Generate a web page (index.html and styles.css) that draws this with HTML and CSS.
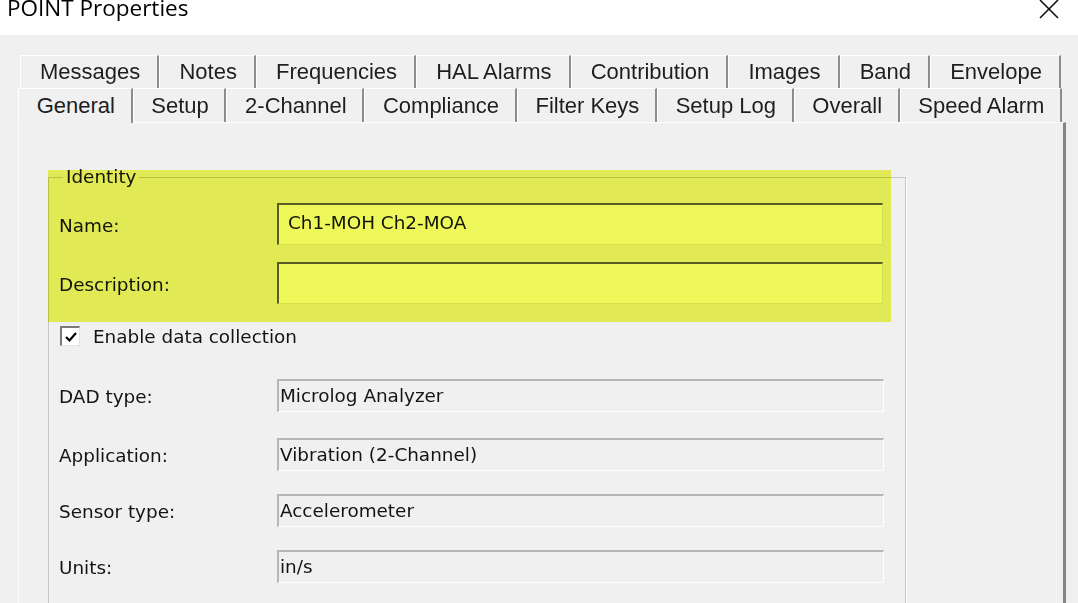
FILE: index.html
```html
<!DOCTYPE html>
<html lang="en">
<head>
    <meta charset="UTF-8">
    <meta name="viewport" content="width=device-width, initial-scale=1.0">
    <title>POINT Properties</title>
    <link rel="stylesheet" href="styles.css">
</head>
<body>
    <div class="titlebar">
        <span class="title">POINT Properties</span>
        <svg class="close" width="22" height="20" viewBox="0 0 22 20">
            <path d="M2 1 L20 19 M20 1 L2 19" stroke="#111" stroke-width="1.6" fill="none"/>
        </svg>
    </div>

    <div class="tabs">
        <div class="tab-row back">
            <div class="tab">Messages</div>
            <div class="tab">Notes</div>
            <div class="tab">Frequencies</div>
            <div class="tab">HAL Alarms</div>
            <div class="tab">Contribution</div>
            <div class="tab">Images</div>
            <div class="tab">Band</div>
            <div class="tab">Envelope</div>
        </div>
        <div class="tab-row front">
            <div class="tab active">General</div>
            <div class="tab">Setup</div>
            <div class="tab">2-Channel</div>
            <div class="tab">Compliance</div>
            <div class="tab">Filter Keys</div>
            <div class="tab">Setup Log</div>
            <div class="tab">Overall</div>
            <div class="tab">Speed Alarm</div>
        </div>
    </div>

    <div class="panel">
        <fieldset class="group">
            <legend>Identity</legend>
            <div class="row">
                <label>Name:</label>
                <div class="edit">Ch1-MOH Ch2-MOA</div>
            </div>
            <div class="row gap-desc">
                <label>Description:</label>
                <div class="edit"></div>
            </div>
            <div class="check-row">
                <span class="checkbox">
                    <svg width="14" height="12" viewBox="0 0 14 12">
                        <path d="M2 6 L5.5 9.5 L12 2" stroke="#000" stroke-width="2.2" fill="none"/>
                    </svg>
                </span>
                <span>Enable data collection</span>
            </div>
            <div class="row gap-dad">
                <label>DAD type:</label>
                <div class="field">Microlog Analyzer</div>
            </div>
            <div class="row gap-app">
                <label>Application:</label>
                <div class="field">Vibration (2-Channel)</div>
            </div>
            <div class="row gap-next">
                <label>Sensor type:</label>
                <div class="field">Accelerometer</div>
            </div>
            <div class="row gap-next">
                <label>Units:</label>
                <div class="field">in/s</div>
            </div>
        </fieldset>

        <!-- marker highlight laid over the identity fields -->
        <div class="highlight"></div>
    </div>
</body>
</html>
```

FILE: styles.css
```css
html, body {
    margin: 0;
    padding: 0;
    width: 1078px;
    height: 603px;
    overflow: hidden;
    background-color: #f0f0f0;
}

.titlebar {
    display: flex;
    justify-content: space-between;
    align-items: flex-start;
    height: 35px;
    padding: 0 18px 0 7px;
    background-color: #fff;
    box-sizing: border-box;
}

.title {
    display: block;
    margin-top: -3px;
    font-family: "Open Sans", sans-serif;
    font-size: 22.5px;
    line-height: 22px;
    color: #000;
}

.close {
    margin-top: -1px;
}

.tabs {
    padding-top: 20px;
}

.tab-row {
    display: flex;
}

.tab-row.back {
    height: 33px;
    margin: 0 17px 0 20px;
}

.tab-row.front {
    height: 34px;
    margin: 0 16px 0 18px;
}

.tab {
    flex: 1 1 auto;
    display: flex;
    align-items: center;
    justify-content: center;
    padding: 0 6px 0 8px;
    border-top: 1px solid #fff;
    border-left: 1px solid #fff;
    border-right: 2px solid #8c8c8c;
    background-color: #f0f0f0;
    font-family: "Liberation Sans", Arial, sans-serif;
    font-size: 22px;
    color: #1e1e1e;
    white-space: nowrap;
}

.tab.active {
    position: relative;
    z-index: 1;
    margin-bottom: -1px;
}

.panel {
    position: relative;
    height: 490px;
    margin: 0 12px 0 18px;
    border-top: 1px solid #fff;
    border-left: 1px solid #fcfcfc;
    border-right: 3px solid #858585;
    font-family: "DejaVu Sans", sans-serif;
    font-size: 18.4px;
    color: #141414;
}

.group {
    box-sizing: border-box;
    width: 858px;
    margin: 44px 0 0 29px;
    padding: 16px 0 60px 10px;
    border: 1px solid #c6c6c6;
    box-shadow: 1px 1px 0 #fff;
}

.group legend {
    margin-left: 4px;
    padding: 0 3px;
    line-height: 20px;
}

.row {
    display: flex;
    align-items: center;
}

.row label {
    width: 218px;
    flex: none;
    padding-top: 2px;
}

.gap-desc { margin-top: 17px; }
.gap-dad { margin-top: 33px; }
.gap-app { margin-top: 26px; }
.gap-next { margin-top: 23px; }

.edit {
    box-sizing: border-box;
    width: 606px;
    height: 42px;
    display: flex;
    align-items: center;
    padding: 0 9px 5px;
    background-color: #fff;
    border-top: 2px solid #5e5e5e;
    border-left: 2px solid #5e5e5e;
    border-right: 1px solid #e6e6e6;
    border-bottom: 1px solid #e6e6e6;
}

.field {
    box-sizing: border-box;
    width: 607px;
    height: 33px;
    display: flex;
    align-items: center;
    padding: 0 1px 2px;
    background-color: #f0f0f0;
    border-top: 2px solid #b6b6b6;
    border-left: 2px solid #b6b6b6;
    border-right: 1px solid #fff;
    border-bottom: 1px solid #fff;
}

.check-row {
    display: flex;
    align-items: center;
    gap: 13px;
    height: 20px;
    margin: 22px 0 0 1px;
}

.checkbox {
    box-sizing: border-box;
    width: 20px;
    height: 20px;
    display: flex;
    align-items: center;
    justify-content: center;
    background-color: #fff;
    border-top: 2px solid #7a7a7a;
    border-left: 2px solid #7a7a7a;
    border-right: 1px solid #e3e3e3;
    border-bottom: 1px solid #e3e3e3;
}

.highlight {
    position: absolute;
    left: 29px;
    top: 47px;
    width: 843px;
    height: 152px;
    background-color: #eff85a;
    mix-blend-mode: multiply;
    pointer-events: none;
}
```
